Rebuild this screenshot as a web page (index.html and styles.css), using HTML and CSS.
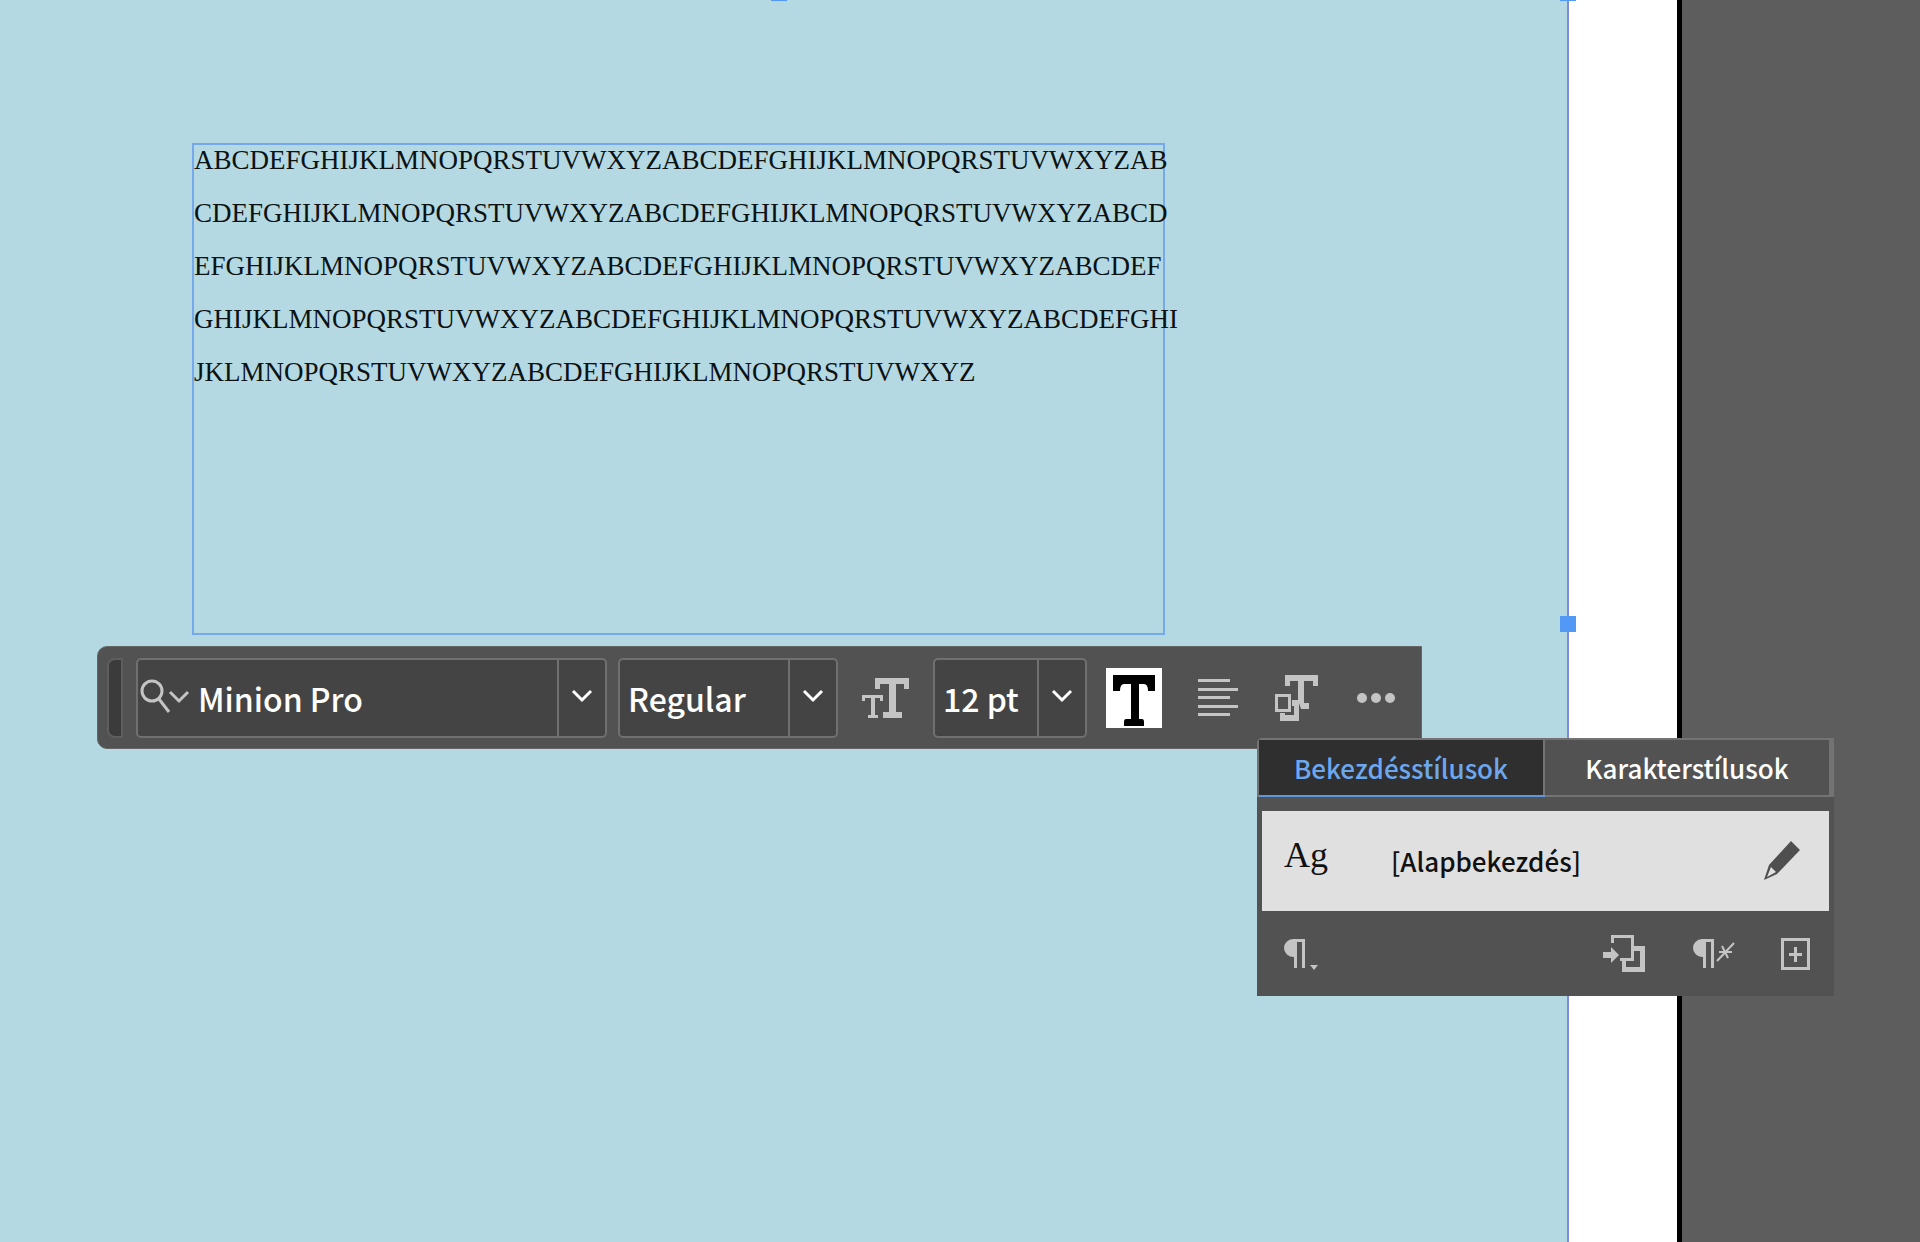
FILE: index.html
```html
<!DOCTYPE html>
<html lang="hu">
<head>
<meta charset="UTF-8" />
<meta name="viewport" content="width=device-width, initial-scale=1" />
<title>Bekezdésstílusok</title>
<link rel="stylesheet" href="styles.css">
</head>
<body>
  <main class="workspace">
    <section class="page">
      <div class="text-frame">
        <p>ABCDEFGHIJKLMNOPQRSTUVWXYZABCDEFGHIJKLMNOPQRSTUVWXYZAB<br>CDEFGHIJKLMNOPQRSTUVWXYZABCDEFGHIJKLMNOPQRSTUVWXYZABCD<br>EFGHIJKLMNOPQRSTUVWXYZABCDEFGHIJKLMNOPQRSTUVWXYZABCDEF<br>GHIJKLMNOPQRSTUVWXYZABCDEFGHIJKLMNOPQRSTUVWXYZABCDEFGHI<br>JKLMNOPQRSTUVWXYZABCDEFGHIJKLMNOPQRSTUVWXYZ</p>
      </div>
      <span class="handle handle-top"></span>
      <span class="handle handle-corner"></span>
      <span class="handle handle-right"></span>
    </section>
    <div class="bleed"></div>
    <div class="page-edge"></div>
    <div class="pasteboard"></div>
  </main>

  <!-- Floating task bar -->
  <div class="taskbar" role="toolbar" aria-label="Text options">
    <span class="grip"></span>

    <div class="field field-font">
      <svg class="search-icon" width="50" height="40" viewBox="0 0 50 40" aria-hidden="true">
        <circle cx="12" cy="13" r="10" />
        <path d="M19 21 L29 34" />
        <path d="M30 14 L39 23 L48 14" />
      </svg>
      <input type="text" id="fontFamily" value="Minion Pro" aria-label="Font family" />
      <button type="button" class="drop" aria-label="Show fonts">
        <svg class="chevron" width="22" height="14" viewBox="0 0 22 14"><path d="M2 2 L11 11 L20 2" /></svg>
      </button>
    </div>

    <div class="field field-style">
      <select id="fontStyle" aria-label="Font style">
        <option>Regular</option>
      </select>
      <span class="drop">
        <svg class="chevron" width="22" height="14" viewBox="0 0 22 14"><path d="M2 2 L11 11 L20 2" /></svg>
      </span>
    </div>

    <label class="size-label" for="fontSize" aria-label="Font size">
      <svg class="icon" width="48" height="42" viewBox="0 0 48 42">
        <path d="M13 1H47V12H42V7H34V35H40V41H21V35H27V7H18V12H13Z" />
        <path d="M0 18H21V24H18V21H13V38H16V41H6V38H9V21H3V24H0Z" />
      </svg>
    </label>

    <div class="field field-size">
      <select id="fontSize">
        <option>12 pt</option>
      </select>
      <span class="drop">
        <svg class="chevron" width="22" height="14" viewBox="0 0 22 14"><path d="M2 2 L11 11 L20 2" /></svg>
      </span>
    </div>

    <div class="tools">
      <button type="button" class="fill" aria-label="Fill color">
        <svg width="56" height="60" viewBox="0 0 56 60">
          <path d="M7 7H49V23H42Q42 16 38 16H33V51H36Q38 51 38 54V58H18V54Q18 51 20 51H25V16H18Q14 16 14 23H7Z" />
        </svg>
      </button>
      <button type="button" aria-label="Align">
        <svg class="icon" width="40" height="40" viewBox="0 0 40 40">
          <path d="M0 1H32V4H0ZM0 10H40V13H0ZM0 18H32V21H0ZM0 27H40V30H0ZM0 35H32V38H0Z" />
        </svg>
      </button>
      <button type="button" aria-label="Styles">
        <svg class="icon" width="46" height="46" viewBox="0 0 46 46">
          <path d="M10 0H43V11H38V6H29V28H34V34H26L23 25V6H15V11H10Z" />
          <path d="M17 25H24V46H5V38H11V40H19V31H17Z" />
          <path d="M0 19H16V37H0ZM3 22V34H13V22Z" fill-rule="evenodd" />
          <path d="M10 37H17V33H19V40H10Z" fill="#525252" />
        </svg>
      </button>
      <button type="button" aria-label="More">
        <svg class="icon" width="38" height="12" viewBox="0 0 38 12">
          <circle cx="5" cy="6" r="5" />
          <circle cx="19" cy="6" r="5" />
          <circle cx="33" cy="6" r="5" />
        </svg>
      </button>
    </div>

    <!-- Styles popover -->
    <div class="styles-panel">
      <div class="tabs" role="tablist">
        <button type="button" class="tab active" role="tab" aria-selected="true">Bekezdésstílusok</button>
        <button type="button" class="tab" role="tab" aria-selected="false">Karakterstílusok</button>
      </div>
      <div class="style-row">
        <span class="sample">Ag</span>
        <span class="style-name">[Alapbekezdés]</span>
        <button type="button" aria-label="Edit style">
          <svg class="pencil" width="38" height="40" viewBox="0 0 38 40">
            <path d="M28 0L37 9L14 33L1 39L6 24ZM8 26L4 36L13 31Z" fill-rule="evenodd" />
          </svg>
        </button>
      </div>
      <div class="panel-footer">
        <button type="button" class="filter" aria-label="Paragraph style menu">
          <svg class="icon" width="36" height="36" viewBox="0 0 36 36">
            <path d="M10 3H22V32H19V6H14V32H11V21H10A9 9 0 0 1 10 3Z" />
            <path d="M27 29H35L31 34Z" />
          </svg>
        </button>
        <button type="button" aria-label="Apply style">
          <svg class="icon" width="43" height="38" viewBox="0 0 43 38">
            <path d="M0 17H8V12L16 20L8 28V23H0Z" />
            <path d="M8 8V0H31V26H17V23H28V3H11V8Z" />
            <path d="M31 11H42V37H19V26H23V32H37V16H31Z" />
          </svg>
        </button>
        <button type="button" aria-label="Clear overrides">
          <svg class="icon" width="43" height="32" viewBox="0 0 43 32">
            <path d="M10 1H22V30H19V4H14V30H11V19H10A9 9 0 0 1 10 1Z" />
            <path d="M25 23L42 5" class="stroke" />
            <path d="M27 14H40M30 8L36 20" class="stroke" />
          </svg>
        </button>
        <button type="button" aria-label="New style">
          <svg class="icon" width="29" height="32" viewBox="0 0 29 32">
            <path d="M0 0H29V32H0ZM3 3V29H26V3Z" fill-rule="evenodd" />
            <path d="M13 9H16V15H21V18H16V24H13V18H8V15H13Z" />
          </svg>
        </button>
      </div>
    </div>
  </div>
</body>
</html>
```
FILE: styles.css
```css
/* Reset & base */
*, *::before, *::after {
  box-sizing: border-box;
}

body {
  margin: 0;
  position: relative;
  font-family: 'Noto Sans CJK SC', 'Noto Sans', sans-serif;
  font-weight: 500;
  background: #5d5d5d;
  overflow: hidden;
}

button {
  display: flex;
  align-items: center;
  justify-content: center;
  margin: 0;
  padding: 0;
  border: none;
  background: none;
  font: inherit;
  color: inherit;
  cursor: pointer;
}

svg {
  display: block;
}

/* Document */
.workspace {
  display: grid;
  grid-template-columns: minmax(0, 1fr) 108px 5px 238px;
  min-height: 100vh;
}

.page {
  position: relative;
  padding: 143px 192px 0;
  background: #b4d9e2;
  border-right: 2px solid #8089e0;
}

.bleed {
  background: #fff;
}

.page-edge {
  background: #000;
}

.text-frame {
  width: 973px;
  min-height: 492px;
  border: 2px solid #75a9ec;
}

.text-frame p {
  margin: 0;
  margin-top: -11px;
  font-family: 'Liberation Serif', serif;
  font-weight: 400;
  font-size: 27px;
  line-height: 53px;
  color: #0c1214;
  white-space: nowrap;
}

/* Selection handles */
.handle {
  position: absolute;
  width: 16px;
  height: 16px;
  background: #5299f5;
}

.handle-top {
  top: -15px;
  left: 771px;
}

.handle-corner {
  top: -15px;
  right: -9px;
}

.handle-right {
  top: 616px;
  right: -9px;
}

/* Task bar */
.taskbar {
  position: absolute;
  top: 646px;
  left: 97px;
  display: flex;
  align-items: center;
  width: 1325px;
  height: 103px;
  padding: 0 26px 0 9px;
  background: #525252;
  border: 1px solid #666;
  border-radius: 10px 0 0 10px;
  color: #fff;
}

.grip {
  width: 16px;
  height: 80px;
  margin-right: 13px;
  background: #3b3b3b;
  border: 2px solid #5e5e5e;
  border-radius: 8px 0 0 8px;
}

.field {
  display: flex;
  height: 80px;
  background: #444;
  border: 2px solid #707070;
  border-radius: 5px;
}

.field-font {
  width: 471px;
  margin-right: 11px;
}

.field-style {
  width: 220px;
}

.field-size {
  width: 154px;
}

.field input,
.field select {
  flex: 1;
  min-width: 0;
  padding: 0 0 0 8px;
  border: none;
  background: none;
  appearance: none;
  font: inherit;
  font-size: 32px;
  line-height: 48px;
  color: #fff;
}

.drop {
  display: flex;
  align-items: center;
  justify-content: center;
  width: 48px;
  padding-bottom: 4px;
  border-left: 2px solid #707070;
  pointer-events: none;
}

button.drop {
  pointer-events: auto;
}

.chevron,
.search-icon {
  fill: none;
  stroke: #fff;
  stroke-width: 3;
}

.search-icon {
  margin: 18px 0 0 2px;
  stroke: #c4c4c4;
}

.size-label {
  margin: 0 23px 0 24px;
}

.icon {
  fill: #c4c4c4;
}

.icon .stroke {
  fill: none;
  stroke: #c4c4c4;
  stroke-width: 2;
}

.tools {
  display: flex;
  flex: 1;
  align-items: center;
  justify-content: space-between;
  margin-left: 19px;
}

.fill {
  background: #fff;
}

/* Styles panel */
.styles-panel {
  position: absolute;
  top: 91px;
  left: 1159px;
  width: 577px;
  background: #525252;
}

.tabs {
  display: flex;
  border: 2px solid #737373;
  border-right-width: 5px;
  border-radius: 5px 0 0 0;
}

.tab {
  flex: 1;
  height: 55px;
  font-size: 26px;
  line-height: 40px;
}

.tab.active {
  background: #2f2f2f;
  color: #6da7ed;
  border-right: 2px solid #737373;
  box-shadow: 0 2px 0 #5f96de;
}

.style-row {
  display: flex;
  align-items: center;
  height: 100px;
  margin: 14px 5px 0;
  padding: 0 28px 0 22px;
  background: #e0e0e0;
  color: #111;
}

.sample {
  width: 107px;
  padding-bottom: 12px;
  font-family: 'Liberation Serif', serif;
  font-weight: 400;
  font-size: 36px;
  line-height: 44px;
}

.style-name {
  flex: 1;
  font-size: 26px;
  line-height: 40px;
}

.pencil {
  fill: #4f4f4f;
}

.panel-footer {
  display: flex;
  align-items: center;
  gap: 46px;
  height: 85px;
  padding: 0 24px 0 26px;
}

.filter {
  margin-right: auto;
}
```
